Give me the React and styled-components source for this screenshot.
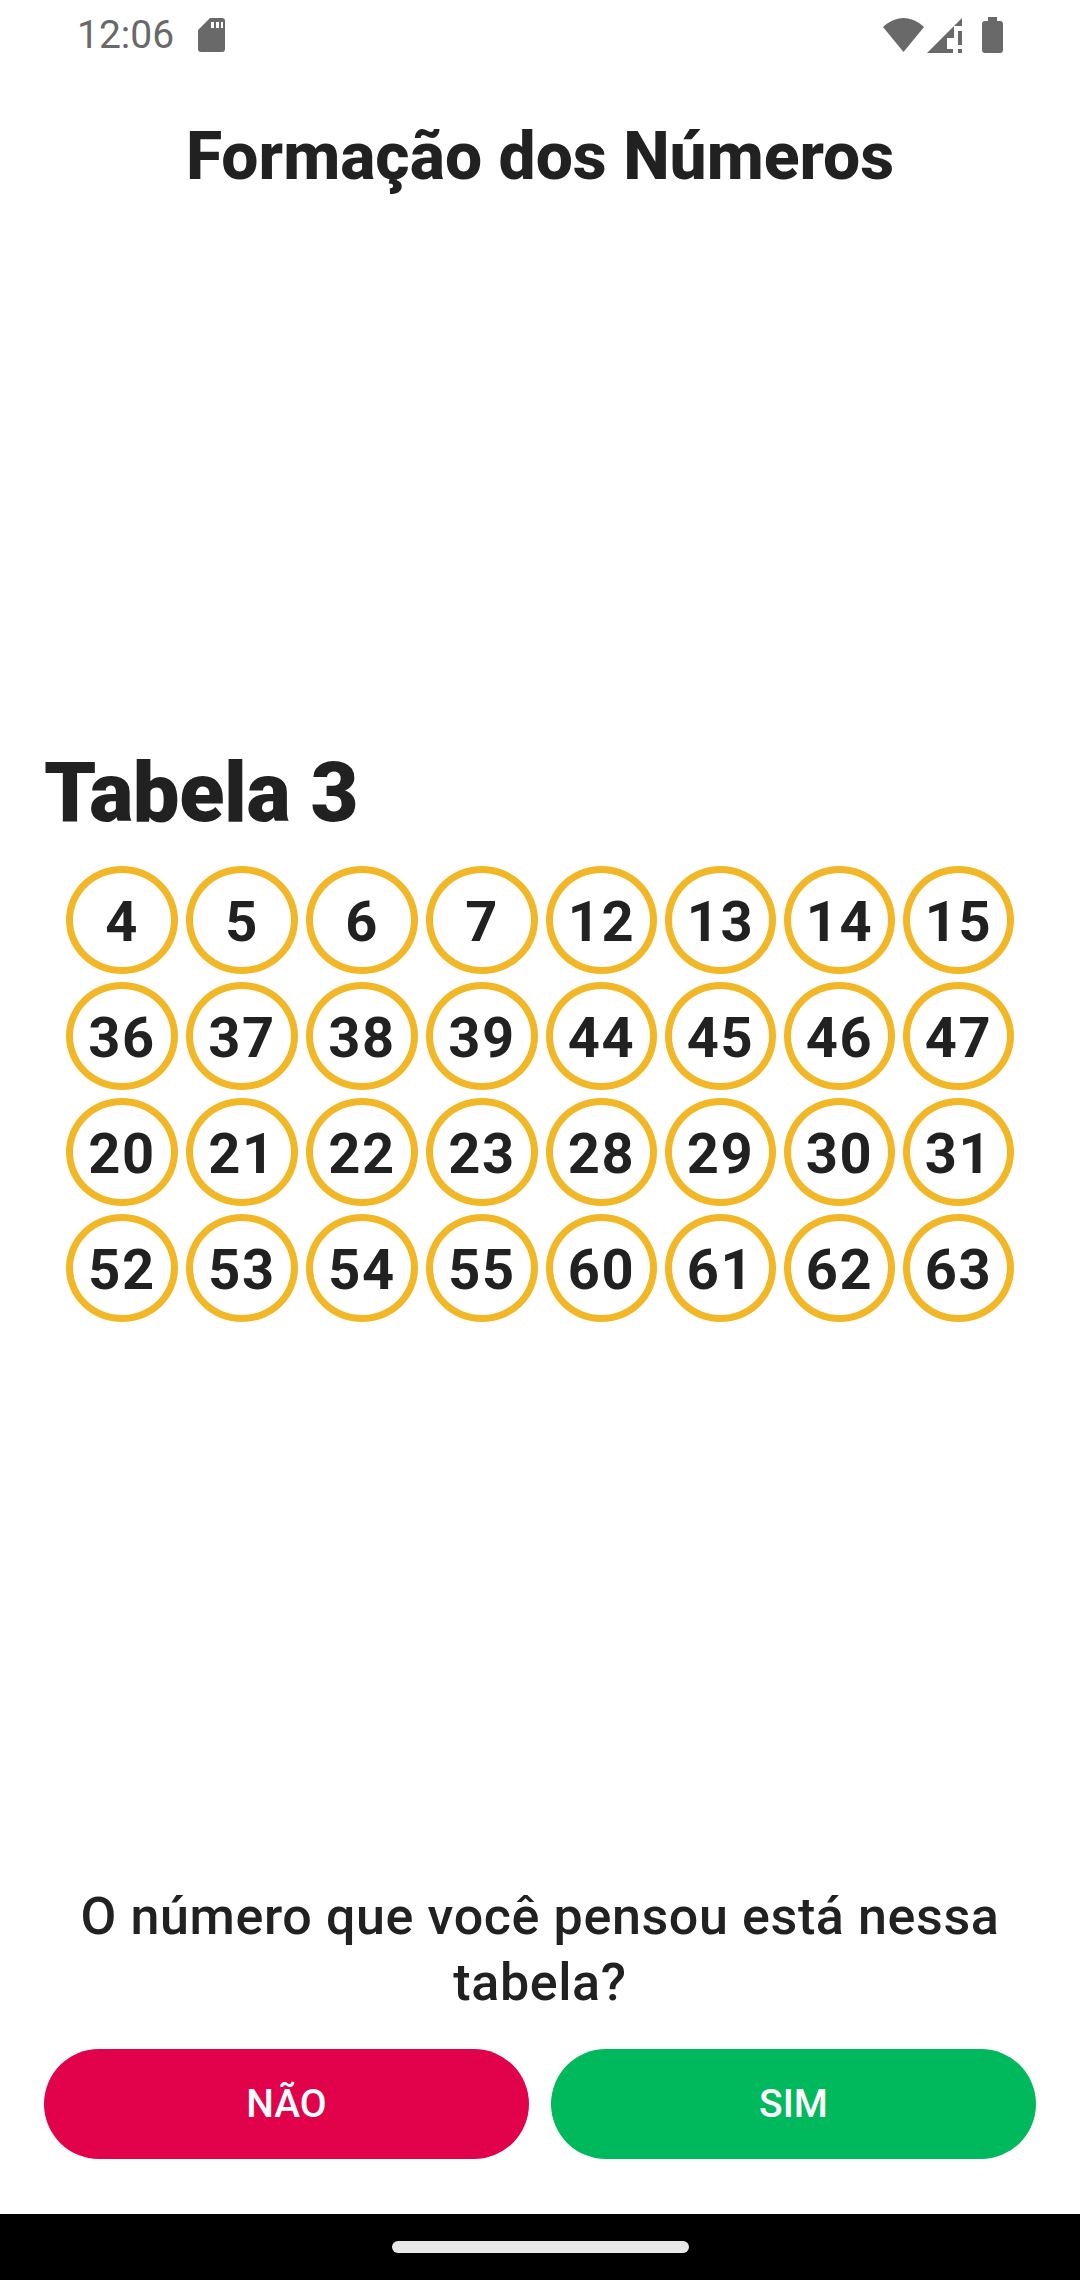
import React from 'react'
import styled, { createGlobalStyle } from 'styled-components'

const rows = [
  [4, 5, 6, 7, 12, 13, 14, 15],
  [36, 37, 38, 39, 44, 45, 46, 47],
  [20, 21, 22, 23, 28, 29, 30, 31],
  [52, 53, 54, 55, 60, 61, 62, 63],
]

const GlobalStyle = createGlobalStyle`
  html, body {
    margin: 0;
    padding: 0;
    background: #fff;
  }
  body {
    font-family: Roboto, "Liberation Sans", sans-serif;
    color: #212121;
  }
`

const Screen = styled.div`
  width: 1080px;
  height: 2280px;
  display: flex;
  flex-direction: column;
  background: #fff;
  overflow: hidden;
`
const StatusBar = styled.div`
  height: 70px;
  flex: none;
  display: flex;
  align-items: center;
  justify-content: space-between;
  padding: 0 77px 0 77px;
  box-sizing: border-box;
`
const StatusGroup = styled.div`
  display: flex;
  align-items: center;
  gap: ${props => props.$gap || 0}px;
`
const Time = styled.span`
  font-size: 39px;
  line-height: 70px;
  color: #696969;
`
const Title = styled.h1`
  margin: 47px 0 0;
  font-size: 66px;
  line-height: 80px;
  font-weight: 800;
  text-align: center;
  color: #212121;
`
const Content = styled.main`
  flex: 1;
  padding: 0 44px 16px;
  display: flex;
  flex-direction: column;
  justify-content: center;
`
const TableTitle = styled.h2`
  margin: 0 0 24px;
  font-size: 83px;
  line-height: 98px;
  font-weight: 900;
  letter-spacing: -0.4px;
  color: #212121;
`
const Board = styled.div`
  display: flex;
  flex-direction: column;
  gap: 8px;
  padding: 0 23px 0 22px;
`
const BoardRow = styled.div`
  display: grid;
  grid-template-columns: repeat(4, 112px) repeat(4, 111px);
  column-gap: 8px;
`
const Ball = styled.div`
  height: 108px;
  box-sizing: border-box;
  border: 7px solid #f2b726;
  border-radius: 50%;
  display: flex;
  align-items: center;
  justify-content: center;
  padding-top: 5px;
  font-size: 56px;
  font-weight: 700;
  letter-spacing: 1.5px;
  color: #212121;
`
const Question = styled.p`
  margin: 0 0 33px;
  padding: 0 60px;
  font-size: 52px;
  line-height: 66px;
  font-weight: 500;
  letter-spacing: 0.62px;
  text-align: center;
  color: #212121;
`
const Actions = styled.div`
  display: grid;
  grid-template-columns: 485px 485px;
  column-gap: 22px;
  padding: 0 44px;
  margin-bottom: 55px;
`
const ActionButton = styled.button`
  height: 110px;
  border: 0;
  border-radius: 55px;
  background: ${props => props.$color};
  color: #fff;
  font-family: inherit;
  font-size: 39px;
  font-weight: 500;
`
const NavBar = styled.div`
  height: 66px;
  flex: none;
  background: #000;
  display: flex;
  justify-content: center;
  padding-top: 27px;
  box-sizing: border-box;
`
const NavPill = styled.div`
  width: 297px;
  height: 12px;
  border-radius: 6px;
  background: #e8e8e8;
`

function SdIcon() {
  return (
    <svg width="27" height="34" viewBox="0 0 27 34">
      <path
        fill="#696969"
        fillRule="evenodd"
        d="M12 0H24a3 3 0 0 1 3 3V31a3 3 0 0 1-3 3H3a3 3 0 0 1-3-3V12ZM13 4V10H16V4ZM18 4V10H21V4ZM23 4V10H25V4Z"
      />
    </svg>
  )
}

function WifiIcon() {
  return (
    <svg width="41" height="34" viewBox="0 0 41 34">
      <path fill="#696969" d="M20.500 34L0 9C6 3.500 13 0 20.500 0S35 3.500 41 9Z" />
    </svg>
  )
}

function SignalIcon() {
  return (
    <svg width="35" height="35" viewBox="0 0 35 35">
      <path
        fill="#696969"
        fillRule="evenodd"
        d="M0 35L35 0V8H27V20H20V31H26V35ZM31 13H35V27H31ZM31 31H35V35H31Z"
      />
    </svg>
  )
}

function BatteryIcon() {
  return (
    <svg width="21" height="36" viewBox="0 0 21 36">
      <path
        fill="#696969"
        d="M6 0H15V4H18a3 3 0 0 1 3 3V33a3 3 0 0 1-3 3H3a3 3 0 0 1-3-3V7a3 3 0 0 1 3-3H6Z"
      />
    </svg>
  )
}

export default function App() {
  return (
    <Screen>
      <GlobalStyle />
      <StatusBar>
        <StatusGroup $gap={24}>
          <Time>12:06</Time>
          <SdIcon />
        </StatusGroup>
        <StatusGroup $gap={20}>
          <StatusGroup $gap={3}>
            <WifiIcon />
            <SignalIcon />
          </StatusGroup>
          <BatteryIcon />
        </StatusGroup>
      </StatusBar>
      <Title>Formação dos Números</Title>
      <Content>
        <TableTitle>Tabela 3</TableTitle>
        <Board>
          {rows.map((row, i) => (
            <BoardRow key={i}>
              {row.map(n => (
                <Ball key={n}>{n}</Ball>
              ))}
            </BoardRow>
          ))}
        </Board>
      </Content>
      <Question>O número que você pensou está nessa tabela?</Question>
      <Actions>
        <ActionButton $color="#e2014b">NÃO</ActionButton>
        <ActionButton $color="#00b95c">SIM</ActionButton>
      </Actions>
      <NavBar>
        <NavPill />
      </NavBar>
    </Screen>
  )
}
